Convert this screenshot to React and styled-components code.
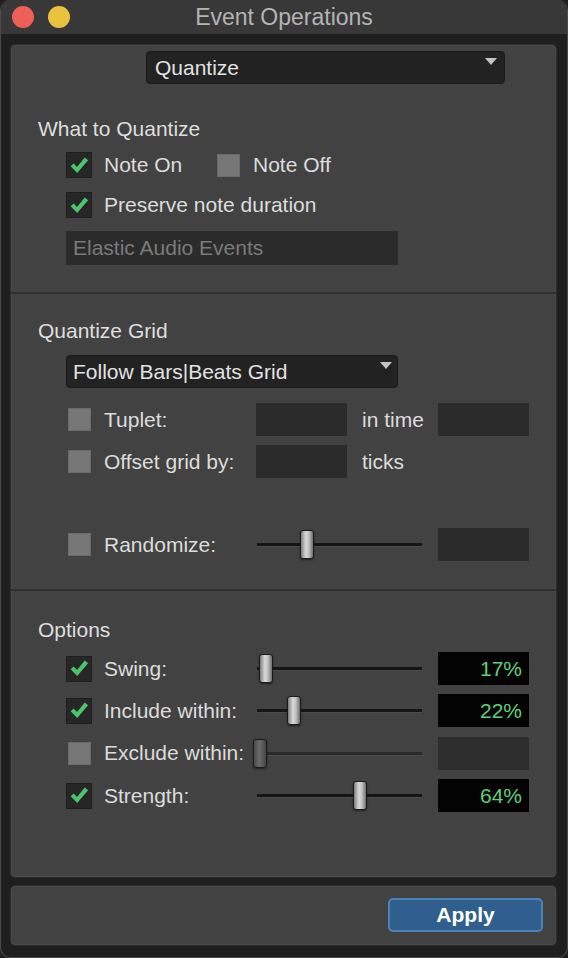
import styled, { createGlobalStyle } from 'styled-components'

const GlobalStyle = createGlobalStyle`
  html, body {
    margin: 0;
    padding: 0;
    background: #1f1f1f;
  }
  body {
    font-family: "Liberation Sans", Arial, sans-serif;
  }
`

const Window = styled.div`
  width: 568px;
  height: 958px;
  box-sizing: border-box;
  display: flex;
  flex-direction: column;
  background: #1f1f1f;
  border-radius: 10px;
  border: 1px solid #4a4a4a;
  border-top: none;
  overflow: hidden;
  color: #dcdcdc;
  font-size: 21px;
`

const TitleBar = styled.div`
  height: 34px;
  flex: none;
  display: grid;
  grid-template-columns: 1fr auto 1fr;
  align-items: center;
  background: #383838;
`

const Lights = styled.div`
  display: flex;
  gap: 14px;
  margin-left: 11px;
`

const Light = styled.span`
  width: 22px;
  height: 22px;
  border-radius: 50%;
  background: ${p => p.$color};
`

const Title = styled.div`
  font-size: 23px;
  color: #b4b4b4;
`

const Body = styled.div`
  flex: 1;
  display: flex;
  flex-direction: column;
  gap: 7px;
  padding: 10px 10px 11px 9px;
`

const Panel = styled.div`
  flex: 1;
  display: flex;
  flex-direction: column;
  background: #424242;
  border: 1px solid #2c2c2c;
  border-radius: 5px;
  box-shadow: inset 0 0 0 1px #4a4a4a;
`

const Section = styled.div`
  display: flex;
  flex-direction: column;
  padding: ${p => p.$top}px 0 ${p => p.$bottom}px;
  border-bottom: ${p => (p.$last ? 'none' : '2px solid #303030')};
  flex: ${p => (p.$last ? 1 : 'none')};
`

const Heading = styled.div`
  margin: ${p => p.$mt}px 0 0 27px;
  line-height: 24px;
  color: #dedede;
`

const Select = styled.div`
  position: relative;
  box-sizing: border-box;
  width: ${p => p.$w}px;
  height: 33px;
  margin: ${p => p.$mt}px 0 0 ${p => p.$ml}px;
  padding-left: ${p => p.$pl}px;
  display: flex;
  align-items: center;
  background: #222;
  border: 1px solid #1a1a1a;
  border-radius: 4px;
  color: #e2e2e2;

  &::after {
    content: '';
    position: absolute;
    right: ${p => p.$ar}px;
    top: 6px;
    border-left: 6px solid transparent;
    border-right: 6px solid transparent;
    border-top: 7px solid #c4c4c4;
  }
`

const CheckRow = styled.div`
  display: grid;
  grid-template-columns: ${p => p.$cols || 'auto'};
  align-items: center;
  margin: ${p => p.$mt}px 0 0 55px;
  height: 26px;
`

const CheckItem = styled.div`
  display: flex;
  align-items: center;
  gap: 12px;
`

const Row = styled.div`
  display: grid;
  grid-template-columns: 26px 164px 182px 91px;
  align-items: center;
  height: 33px;
  margin: ${p => p.$mt}px 0 0 55px;
`

const Label = styled.span`
  padding-left: ${p => p.$pl || 0}px;
  white-space: nowrap;
  color: #dcdcdc;
`

const BoxSlot = styled.span`
  width: 26px;
  height: 26px;
  display: flex;
  align-items: center;
  justify-content: center;
`

const Box = styled.span`
  box-sizing: border-box;
  width: ${p => (p.$on ? 26 : 23)}px;
  height: ${p => (p.$on ? 26 : 23)}px;
  display: flex;
  align-items: center;
  justify-content: center;
  background: ${p => (p.$on ? '#262626' : '#777')};
  border: 1px solid ${p => (p.$on ? '#1e1e1e' : '#6a6a6a')};
`

const Field = styled.div`
  box-sizing: border-box;
  width: ${p => p.$w}px;
  height: ${p => p.$h || 33}px;
  margin: ${p => p.$mt || 0}px 0 0 ${p => p.$ml || 0}px;
  padding: 0 7px;
  display: flex;
  align-items: center;
  justify-content: ${p => (p.$value ? 'flex-end' : 'flex-start')};
  background: ${p => p.$bg || '#2b2b2b'};
  color: ${p => p.$color || '#7a7a7a'};
`

const Middle = styled.div`
  display: flex;
  align-items: center;
  gap: 15px;
`

const Slider = styled.div`
  position: relative;
  width: 165px;
  height: 33px;
  margin-left: 1px;

  &::before {
    content: '';
    position: absolute;
    left: 0;
    right: 0;
    top: 15px;
    height: 3px;
    background: ${p => (p.$off ? '#2a2a2a' : '#151515')};
    border-bottom: 1px solid #4c4c4c;
  }
`

const Thumb = styled.span`
  position: absolute;
  top: 2px;
  left: ${p => p.$x}px;
  box-sizing: border-box;
  width: 14px;
  height: 29px;
  border: 1px solid #1b1b1b;
  border-radius: 3px;
  background: ${p =>
    p.$off
      ? 'linear-gradient(90deg, #4a4a4a, #6a6a6a 45%, #5a5a5a 70%, #444)'
      : 'linear-gradient(90deg, #7c7c7c, #d9d9d9 40%, #c2c2c2 65%, #6e6e6e)'};
  box-shadow: 0 1px 2px rgba(0, 0, 0, 0.5);
`

const Footer = styled.div`
  height: 61px;
  flex: none;
  box-sizing: border-box;
  display: flex;
  justify-content: flex-end;
  align-items: flex-start;
  padding: 12px 13px 0 0;
  background: #424242;
  border: 1px solid #2c2c2c;
  border-radius: 5px;
  box-shadow: inset 0 0 0 1px #4a4a4a;
`

const ApplyButton = styled.button`
  width: 155px;
  height: 34px;
  box-sizing: border-box;
  border: 2px solid #4b82ba;
  border-radius: 5px;
  background: #305f8e;
  color: #fff;
  font-family: "Liberation Sans", Arial, sans-serif;
  font-size: 21px;
  font-weight: bold;
  padding: 0;
`

const Check = () => (
  <svg width="21" height="21" viewBox="0 0 20 20">
    <path d="M1.6 10.6 L4.4 8 L7.6 11.4 L15 2.4 L18.2 5 L7.8 17.2 Z" fill="#4cc46a" />
  </svg>
)

const CheckBox = ({ on }) => (
  <BoxSlot>
    <Box $on={on}>{on && <Check />}</Box>
  </BoxSlot>
)

const SliderRow = ({ on, label, thumb, value, off, mt }) => (
  <Row $mt={mt}>
    <CheckBox on={on} />
    <Label $pl={12}>{label}</Label>
    <Slider $off={off}>
      <Thumb $x={thumb} $off={off} />
    </Slider>
    {value ? (
      <Field $w={91} $bg="#030303" $color="#5fd07a" $value>
        {value}
      </Field>
    ) : (
      <Field $w={91} $bg="#2e2e2e" />
    )}
  </Row>
)

const App = () => (
  <>
    <GlobalStyle />
    <Window>
      <TitleBar>
        <Lights>
          <Light $color="#ee5f57" />
          <Light $color="#e9c23e" />
        </Lights>
        <Title>Event Operations</Title>
        <span />
      </TitleBar>
      <Body>
        <Panel>
          <Section $top={6} $bottom={27}>
            <Select $w={359} $ml={135} $mt={0} $pl={8} $ar={7}>
              Quantize
            </Select>
            <Heading $mt={33}>What to Quantize</Heading>
            <CheckRow $mt={11} $cols="149px auto">
              <CheckItem>
                <CheckBox on />
                <Label>Note On</Label>
              </CheckItem>
              <CheckItem>
                <CheckBox />
                <Label>Note Off</Label>
              </CheckItem>
            </CheckRow>
            <CheckRow $mt={14}>
              <CheckItem>
                <CheckBox on />
                <Label>Preserve note duration</Label>
              </CheckItem>
            </CheckRow>
            <Field $w={332} $h={34} $mt={13} $ml={55}>
              Elastic Audio Events
            </Field>
          </Section>

          <Section $top={25} $bottom={28}>
            <Heading $mt={0}>Quantize Grid</Heading>
            <Select $w={332} $ml={55} $mt={12} $pl={6} $ar={5}>
              Follow Bars|Beats Grid
            </Select>
            <Row $mt={15}>
              <CheckBox />
              <Label $pl={12}>Tuplet:</Label>
              <Middle>
                <Field $w={91} />
                <Label>in time</Label>
              </Middle>
              <Field $w={91} />
            </Row>
            <Row $mt={9}>
              <CheckBox />
              <Label $pl={12}>Offset grid by:</Label>
              <Middle>
                <Field $w={91} />
                <Label>ticks</Label>
              </Middle>
            </Row>
            <Row $mt={50}>
              <CheckBox />
              <Label $pl={12}>Randomize:</Label>
              <Slider>
                <Thumb $x={43} />
              </Slider>
              <Field $w={91} />
            </Row>
          </Section>

          <Section $top={27} $bottom={0} $last>
            <Heading $mt={0}>Options</Heading>
            <SliderRow mt={10} on label="Swing:" thumb={2} value="17%" />
            <SliderRow mt={9.4} on label="Include within:" thumb={30} value="22%" />
            <SliderRow mt={9.4} label="Exclude within:" thumb={-4} off />
            <SliderRow mt={9.4} on label="Strength:" thumb={96} value="64%" />
          </Section>
        </Panel>
        <Footer>
          <ApplyButton>Apply</ApplyButton>
        </Footer>
      </Body>
    </Window>
  </>
)

export default App
